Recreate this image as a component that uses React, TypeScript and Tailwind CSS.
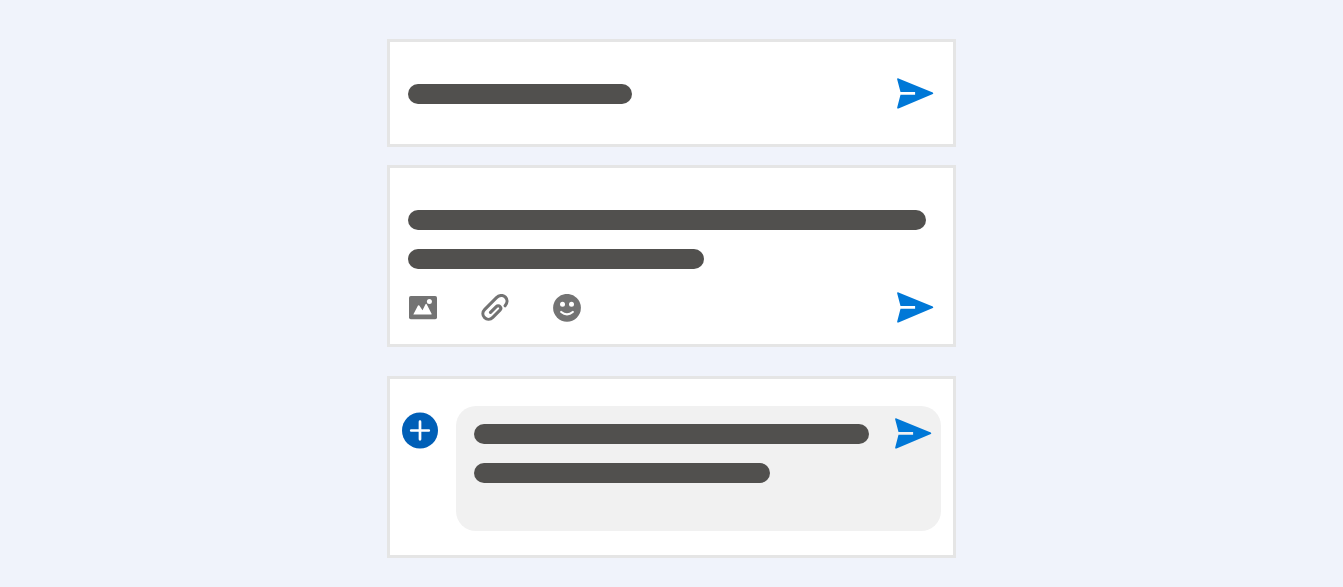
function SendButton() {
  return (
    <button type="button" aria-label="Send" className="shrink-0">
      <svg className="block h-8 w-9.5" viewBox="0 0 38 32" fill="none">
        <path
          d="M0.2 1.6C0 0.6 0.6 0.1 1.5 0.4L35.8 14.6Q36.9 15.3 35.8 16.1L1.5 30.5C0.6 30.8 0 30.4 0.2 29.4L3.5 16.8H18.1V14H3.5Z"
          fill="#0078d7"
        />
      </svg>
    </button>
  );
}

function ImageIcon() {
  return (
    <svg className="block size-7" viewBox="0 0 28 28">
      <rect y="2" width="28" height="23.2" rx="1.8" fill="#737373" />
      <path
        d="M4.3 20.5L9 11.6Q9.6 10.7 10.3 11.6L13.5 16.2L16.5 10.2Q17.1 9.3 17.7 10.2L22.6 19.8Q22.9 20.5 22.2 20.5Z"
        fill="#fff"
      />
      <circle cx="20.4" cy="7.5" r="2.5" fill="#fff" />
    </svg>
  );
}

function ClipIcon() {
  return (
    <svg className="block size-7" viewBox="0 0 28 28" fill="none">
      <path
        d="M9.5 18.4L15.3 12.7C16.3 11.7 18 11.6 19 12.6C20 13.6 20 15.1 19 16.1L11.8 23.3C9.4 25.7 5.9 26 3.6 23.7C1.2 21.3 1.4 17.8 3.8 15.4L15.5 3.7C18.2 1 22 0.7 24.4 3.1C26.7 5.4 26.5 9 24.1 11.8"
        stroke="#737373"
        strokeWidth="3.1"
        strokeLinecap="round"
        strokeLinejoin="round"
      />
    </svg>
  );
}

function SmileIcon() {
  return (
    <svg className="block size-7" viewBox="0 0 28 28" fill="none">
      <circle cx="14" cy="13.8" r="13.9" fill="#737373" />
      <circle cx="9.5" cy="10.3" r="2.5" fill="#fff" />
      <circle cx="18.5" cy="10.3" r="2.5" fill="#fff" />
      <path d="M8.2 18Q14 22.6 19.8 18" stroke="#fff" strokeWidth="2.2" strokeLinecap="round" />
    </svg>
  );
}

export default function App() {
  return (
    <main className="min-h-screen bg-[#f0f3fb] pt-[39px] pb-7">
      <div className="mx-auto w-full max-w-[569px]">
        {/* Single line */}
        <section className="flex items-start justify-between border-3 border-[#e5e5e5] bg-white pt-9 pr-[18px] pb-[34px] pl-[18px]">
          <div className="mt-1.5 h-5 w-[224px] rounded-full bg-[#51504e]" />
          <SendButton />
        </section>

        {/* Two lines with a toolbar */}
        <section className="mt-[18px] border-3 border-[#e5e5e5] bg-white px-[18px] pt-[42px] pb-5">
          <div className="h-5 w-[518px] max-w-full rounded-full bg-[#51504e]" />
          <div className="mt-[19px] h-5 w-[296px] rounded-full bg-[#51504e]" />
          <div className="mt-[23px] flex items-center justify-between pl-px">
            <div className="flex gap-11">
              <button type="button" aria-label="Add image">
                <ImageIcon />
              </button>
              <button type="button" aria-label="Attach file">
                <ClipIcon />
              </button>
              <button type="button" aria-label="Add emoji">
                <SmileIcon />
              </button>
            </div>
            <SendButton />
          </div>
        </section>

        {/* Add button beside a filled input */}
        <section className="mt-[29px] flex items-start gap-[18px] border-3 border-[#e5e5e5] bg-white pt-[27px] pr-3 pb-6 pl-3">
          <button type="button" aria-label="Add" className="mt-1.5 shrink-0">
            <svg className="block h-[37px] w-9" viewBox="0 0 36 37" fill="none">
              <circle cx="18" cy="18.5" r="18" fill="#005fb7" />
              <path d="M18 9.7V27.3M9.2 18.5H26.8" stroke="#fff" strokeWidth="2.7" strokeLinecap="round" />
            </svg>
          </button>
          <div className="flex min-h-[125px] flex-1 items-start justify-between rounded-[20px] bg-[#f1f1f1] pt-3 pr-2 pl-[18px]">
            <div className="mt-1.5">
              <div className="h-5 w-[395px] rounded-full bg-[#51504e]" />
              <div className="mt-[19px] h-5 w-[296px] rounded-full bg-[#51504e]" />
            </div>
            <SendButton />
          </div>
        </section>
      </div>
    </main>
  );
}
